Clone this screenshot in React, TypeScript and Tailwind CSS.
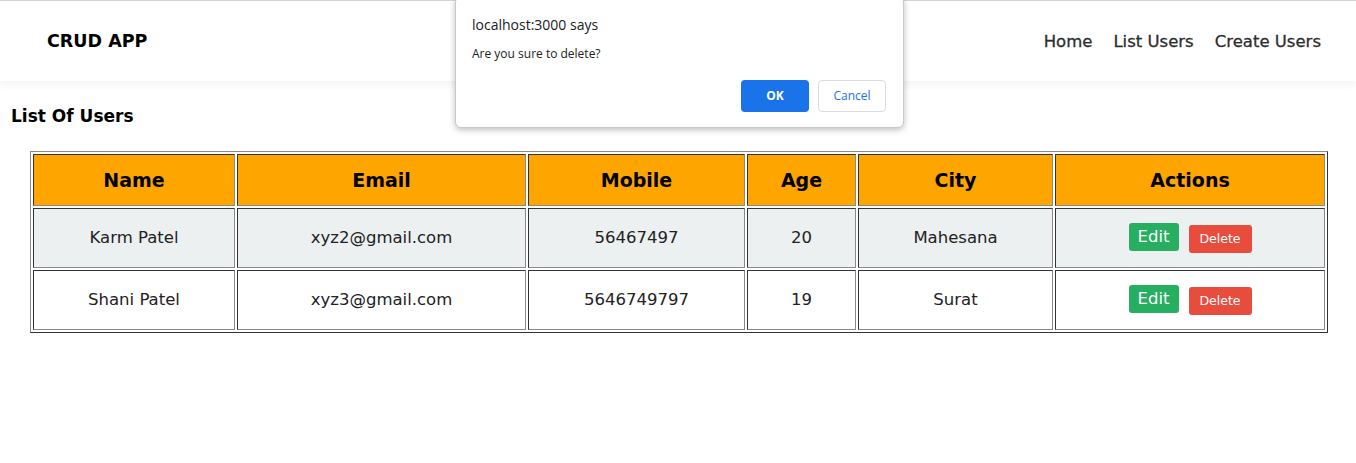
type User = { name: string; email: string; mobile: string; age: number; city: string }

const users: User[] = [
  { name: 'Karm Patel', email: 'xyz2@gmail.com', mobile: '56467497', age: 20, city: 'Mahesana' },
  { name: 'Shani Patel', email: 'xyz3@gmail.com', mobile: '5646749797', age: 19, city: 'Surat' },
]

const columns = [
  { label: 'Name', w: 'w-[202px]' },
  { label: 'Email', w: 'w-[289px]' },
  { label: 'Mobile', w: 'w-[217px]' },
  { label: 'Age', w: 'w-[109px]' },
  { label: 'City', w: 'w-[195px]' },
  { label: 'Actions', w: 'w-[270px]' },
]

const cell =
  'border border-solid border-t-[#333] border-l-[#333] border-r-[#8a8a8a] border-b-[#8a8a8a] text-center p-0'

export default function App() {
  return (
    <div className="relative min-h-[463px] bg-white font-['DejaVu_Sans',sans-serif] text-[#222]">
      <nav className="flex h-[81px] items-center justify-between border-t border-[#d4d4d4] bg-white pl-[47px] pr-[35px] shadow-[0_3px_8px_rgba(0,0,0,0.06)]">
        <span className="text-[17.5px] font-bold text-black">CRUD APP</span>
        <div className="mt-[2px] flex gap-[21px] text-[16.5px] text-[#2d2d2d] [-webkit-text-stroke:0.3px_#2d2d2d]">
          <a>Home</a>
          <a>List Users</a>
          <a>Create Users</a>
        </div>
      </nav>

      <h3 className="ml-[11px] mt-[23px] text-[17px] font-bold leading-[24px] text-black">List Of Users</h3>

      <table className="ml-[30px] mt-[23px] w-[1298px] table-fixed border-separate border-spacing-[2px] border border-solid border-t-[#8a8a8a] border-l-[#8a8a8a] border-r-[#333] border-b-[#333]">
        <thead>
          <tr className="h-[52px] bg-[#ffa500]">
            {columns.map((c) => (
              <th key={c.label} className={[cell, c.w, 'text-[19px] font-bold text-black'].join(' ')}>
                {c.label}
              </th>
            ))}
          </tr>
        </thead>
        <tbody className="text-[16.5px]">
          {users.map((u, i) => (
            <tr key={u.email} className={['h-[60px]', i === 0 ? 'bg-[#ecf0f1]' : 'bg-white'].join(' ')}>
              <td className={cell}>{u.name}</td>
              <td className={cell}>{u.email}</td>
              <td className={cell}>{u.mobile}</td>
              <td className={cell}>{u.age}</td>
              <td className={cell}>{u.city}</td>
              <td className={cell}>
                <div className="flex items-start justify-center gap-[10px]">
                  <button className="flex h-[28px] w-[50px] items-center justify-center rounded-[3px] bg-[#27ae60] text-[16.5px] text-white">
                    Edit
                  </button>
                  <button className="mt-[2px] flex h-[28px] w-[63px] items-center justify-center rounded-[3px] bg-[#e74c3c] text-[12.5px] text-white">
                    Delete
                  </button>
                </div>
              </td>
            </tr>
          ))}
        </tbody>
      </table>

      {/* browser confirm() dialog */}
      <div className="absolute left-[455px] top-[-4px] flex h-[132px] w-[449px] flex-col rounded-[6px] border border-[#c8c8c8] bg-white pl-[16px] pr-[17px] pt-[18px] font-['Open_Sans',sans-serif] text-[#202124] shadow-[0_2px_6px_rgba(0,0,0,0.25)]">
        <p className="text-[14px] leading-[20px]">localhost:3000 says</p>
        <p className="mt-[11px] text-[12px] leading-[16px]">Are you sure to delete?</p>
        <div className="mt-[18px] flex justify-end gap-[9px]">
          <button className="h-[32px] w-[68px] rounded-[4px] bg-[#1a73e8] text-[12px] font-bold text-white">OK</button>
          <button className="h-[32px] w-[68px] rounded-[4px] border border-[#dadce0] bg-white text-[12px] text-[#1a73e8]">
            Cancel
          </button>
        </div>
      </div>
    </div>
  )
}
